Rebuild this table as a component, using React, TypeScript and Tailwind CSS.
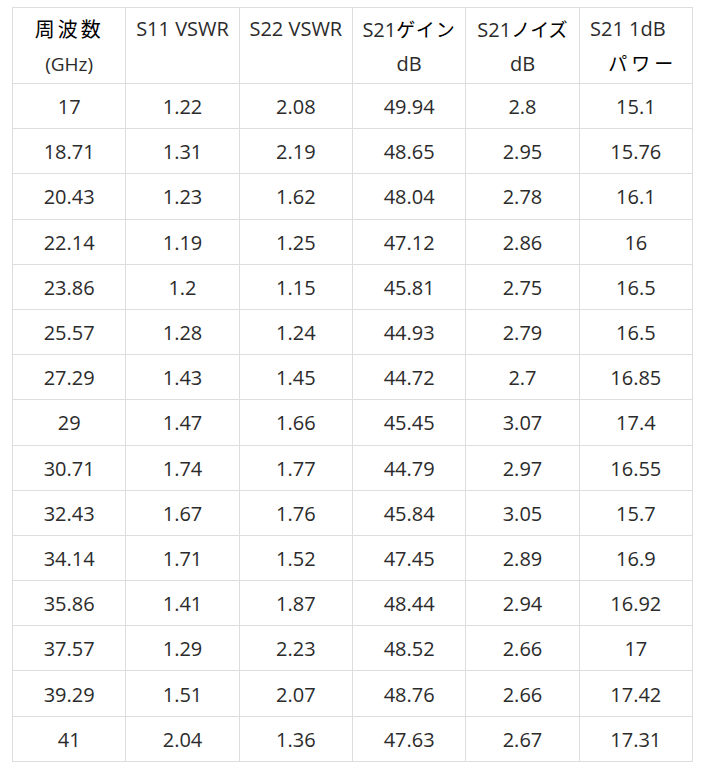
const rows: string[][] = [
  ['17', '1.22', '2.08', '49.94', '2.8', '15.1'],
  ['18.71', '1.31', '2.19', '48.65', '2.95', '15.76'],
  ['20.43', '1.23', '1.62', '48.04', '2.78', '16.1'],
  ['22.14', '1.19', '1.25', '47.12', '2.86', '16'],
  ['23.86', '1.2', '1.15', '45.81', '2.75', '16.5'],
  ['25.57', '1.28', '1.24', '44.93', '2.79', '16.5'],
  ['27.29', '1.43', '1.45', '44.72', '2.7', '16.85'],
  ['29', '1.47', '1.66', '45.45', '3.07', '17.4'],
  ['30.71', '1.74', '1.77', '44.79', '2.97', '16.55'],
  ['32.43', '1.67', '1.76', '45.84', '3.05', '15.7'],
  ['34.14', '1.71', '1.52', '47.45', '2.89', '16.9'],
  ['35.86', '1.41', '1.87', '48.44', '2.94', '16.92'],
  ['37.57', '1.29', '2.23', '48.52', '2.66', '17'],
  ['39.29', '1.51', '2.07', '48.76', '2.66', '17.42'],
  ['41', '2.04', '1.36', '47.63', '2.67', '17.31'],
];

const jp = "font-['Noto_Sans_CJK_JP',sans-serif] text-black";

export default function App() {
  return (
    <div className="w-[703px] h-[777px] bg-white pt-[7px] pl-[12px] font-['Open_Sans','Noto_Sans_CJK_JP',sans-serif] text-[#2b2b2b] text-[20px]">
      <table className="w-[681px] table-fixed border-collapse">
        <thead>
          <tr className="h-[76px]">
            <th className="border border-[#ddd] font-normal leading-[34px] align-top pt-1">
              <span className={`${jp} tracking-[3px]`}>周波数</span>
              <br />
              <span className="text-[19px]">(GHz)</span>
            </th>
            <th className="border border-[#ddd] font-normal leading-[34px] align-top pt-1">S11 VSWR</th>
            <th className="border border-[#ddd] font-normal leading-[34px] align-top pt-1">S22 VSWR</th>
            <th className="border border-[#ddd] font-normal leading-[34px] align-top pt-1">
              S21<span className={`${jp} text-[19px] tracking-[1px]`}>ゲイン</span>
              <br />
              dB
            </th>
            <th className="border border-[#ddd] font-normal leading-[34px] align-top pt-1">
              S21<span className={`${jp} text-[19px]`}>ノイズ</span>
              <br />
              dB
            </th>
            <th className="border border-[#ddd] font-normal leading-[34px] align-top pt-1">
              <span className="pr-[16px]">S21 1dB</span>
              <br />
              <span className={`${jp} text-[19px] tracking-[4px] pl-[14px]`}>パワー</span>
            </th>
          </tr>
        </thead>
        <tbody>
          {rows.map((r, i) => (
            <tr key={i} className="h-[45.2px]">
              {r.map((c, j) => (
                <td key={j} className="border border-[#ddd] text-center align-middle pt-[2px]">
                  {c}
                </td>
              ))}
            </tr>
          ))}
        </tbody>
      </table>
    </div>
  );
}
